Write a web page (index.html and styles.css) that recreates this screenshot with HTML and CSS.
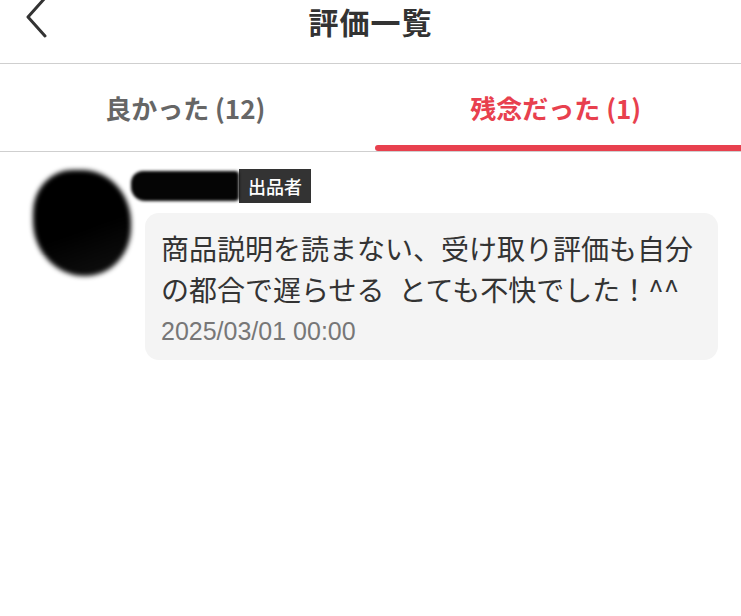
FILE: index.html
```html
<!DOCTYPE html>
<html lang="ja">
<head>
    <meta charset="UTF-8">
    <meta name="viewport" content="width=device-width, initial-scale=1.0">
    <title>評価一覧</title>
    <link rel="stylesheet" href="styles.css">
</head>
<body>
    <header class="header">
        <div class="back">
            <svg width="26" height="40" viewBox="0 0 26 40">
                <polyline points="21,-2 4,17 21,36" fill="none" stroke="#333" stroke-width="3" stroke-linecap="round" stroke-linejoin="round"/>
            </svg>
        </div>
        <h1 class="title">評価一覧</h1>
        <div></div>
    </header>
    <nav class="tabs">
        <div class="tab">
            <span class="tab-label">良かった (12)</span>
        </div>
        <div class="tab active">
            <span class="tab-label">残念だった (1)</span>
        </div>
    </nav>
    <div class="review">
        <div class="avatar"></div>
        <div class="review-body">
            <div class="name-row">
                <span class="name"></span>
                <span class="badge">出品者</span>
            </div>
            <div class="bubble">
                <p class="comment">商品説明を読まない、受け取り評価も自分の都合で遅らせる&ensp;とても不快でした！^^</p>
                <div class="date">2025/03/01 00:00</div>
            </div>
        </div>
    </div>
</body>
</html>
```

FILE: styles.css
```css
body {
    margin: 0;
    background-color: #fff;
    font-family: "Noto Sans CJK JP", "Noto Sans", sans-serif;
    color: #333;
}
.header {
    display: grid;
    grid-template-columns: 1fr auto 1fr;
    height: 63px;
    border-bottom: 1px solid #cfcfcf;
}
.back {
    padding-left: 24px;
    height: 40px;
}
.back svg {
    display: block;
}
.title {
    margin: 0;
    padding-top: 3px;
    font-size: 30px;
    font-weight: 700;
    line-height: 36px;
    letter-spacing: 1px;
    color: #333;
}
.tabs {
    display: grid;
    grid-template-columns: 1fr 1fr;
    border-bottom: 1px solid #cfcfcf;
}
.tab {
    display: flex;
    flex-direction: column;
    align-items: center;
    height: 87px;
}
.tab-label {
    padding-top: 24px;
    font-size: 26px;
    font-weight: 700;
    line-height: 40px;
    color: #666;
}
.tab.active .tab-label {
    color: #e8404e;
}
.tab.active::after {
    content: "";
    margin-top: auto;
    align-self: stretch;
    margin-left: 4px;
    height: 6px;
    border-radius: 3px 0 0 3px;
    background-color: #e8404e;
}
.review {
    display: grid;
    grid-template-columns: 100px 1fr;
    column-gap: 12px;
    padding: 17px 23px 0 33px;
}
.avatar {
    width: 98px;
    height: 106px;
    margin-top: 1px;
    border-radius: 40% 50% 46% 52%;
    background: linear-gradient(160deg, #000 55%, #111 100%);
    filter: blur(2.5px);
}
.name-row {
    display: flex;
    align-items: center;
    height: 34px;
}
.name {
    margin-left: -14px;
    width: 108px;
    height: 30px;
    border-radius: 12px 4px 4px 14px;
    background-color: #050505;
    filter: blur(1.5px);
}
.badge {
    padding: 0 9px;
    line-height: 34px;
    font-size: 18px;
    font-weight: 500;
    color: #fff;
    background-color: #333;
}
.bubble {
    margin-top: 10px;
    padding: 15px 16px 13px 16px;
    border-radius: 14px;
    background-color: #f4f4f4;
}
.comment {
    margin: 0;
    font-size: 28px;
    line-height: 41px;
    color: #333;
}
.date {
    margin-top: 5px;
    font-family: "Liberation Sans", sans-serif;
    font-size: 25px;
    line-height: 32px;
    color: #777;
}
```
